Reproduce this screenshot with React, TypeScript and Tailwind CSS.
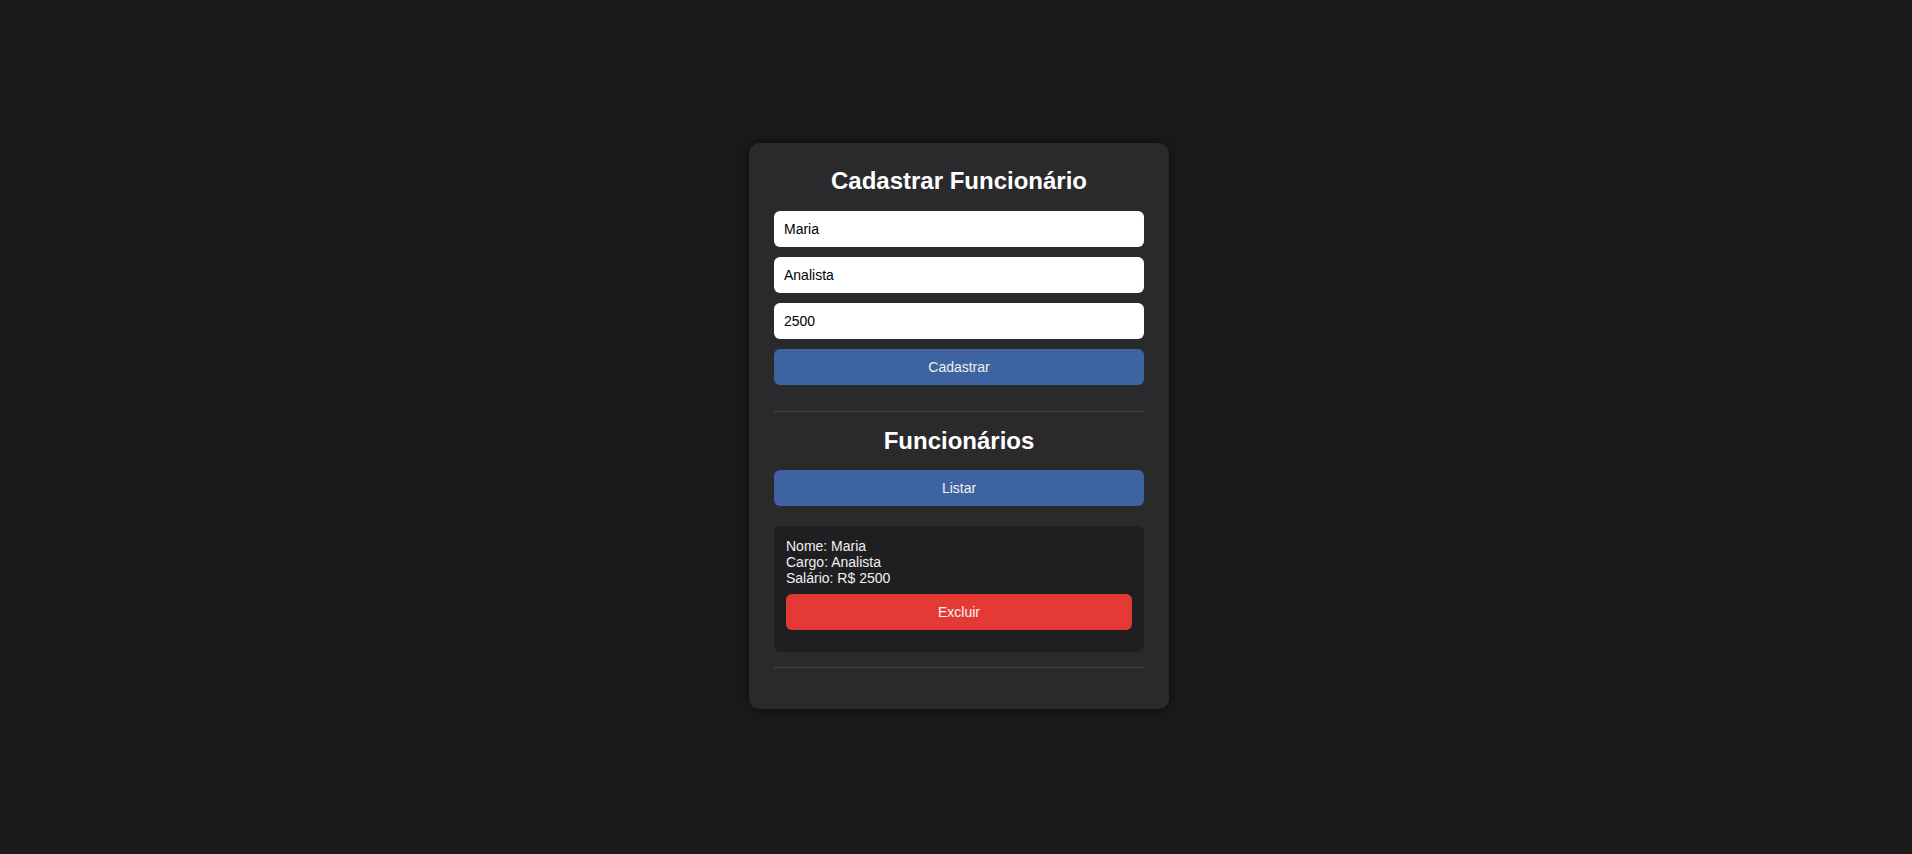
import React from "react";

export default function App() {
  const font = { fontFamily: '"Liberation Sans", Arial, sans-serif' };
  return (
    <div
      className="min-h-screen w-full bg-[#1a1a1a] flex items-center justify-center pl-[6px] pb-[2px]"
      style={font}
    >
      <div className="w-[420px] bg-[#2a2a2d] rounded-[10px] pt-[24px] px-[25px] pb-[25px] shadow-[0_0_12px_rgba(0,0,0,0.5)]">
        <h2 className="text-[24px] leading-[28px] font-bold text-white text-center mb-[16px]">
          Cadastrar Funcionário
        </h2>
        <input
          defaultValue="Maria"
          className="block w-full h-[36px] px-[10px] rounded-[6px] bg-white text-black text-[14px] mb-[10px] outline-none"
        />
        <input
          defaultValue="Analista"
          className="block w-full h-[36px] px-[10px] rounded-[6px] bg-white text-black text-[14px] mb-[10px] outline-none"
        />
        <input
          defaultValue="2500"
          className="block w-full h-[36px] px-[10px] rounded-[6px] bg-white text-black text-[14px] mb-[10px] outline-none"
        />
        <button className="block w-full h-[36px] rounded-[6px] bg-[#3d64a0] text-[#f0f0f0] text-[14px]">
          Cadastrar
        </button>
        <div className="h-px bg-[#444446] mt-[26px]" />
        <h2 className="text-[24px] leading-[28px] font-bold text-white text-center mt-[15px] mb-[15px]">
          Funcionários
        </h2>
        <button className="block w-full h-[36px] rounded-[6px] bg-[#3d64a0] text-[#f0f0f0] text-[14px]">
          Listar
        </button>
        <div className="mt-[20px] bg-[#1f1f22] rounded-[6px] p-[12px] pb-[22px]">
          <div className="text-[14px] leading-[16px] text-[#f0f0f0]">
            <div>Nome: Maria</div>
            <div>Cargo: Analista</div>
            <div>Salário: R$ 2500</div>
          </div>
          <button className="block w-full h-[36px] mt-[8px] rounded-[6px] bg-[#e53935] text-[#f5f5f5] text-[14px]">
            Excluir
          </button>
        </div>
        <div className="h-px bg-[#444446] mt-[15px] mb-[16px]" />
      </div>
    </div>
  );
}
